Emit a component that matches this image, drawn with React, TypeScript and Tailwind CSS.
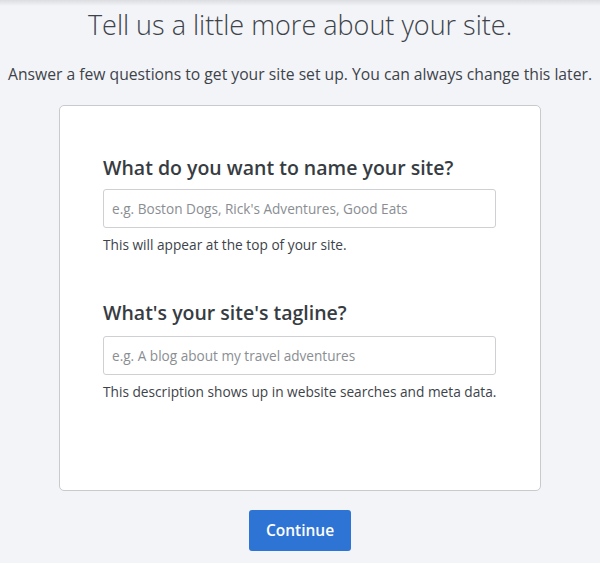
export default function App() {
  return (
    <div className="min-h-[563px] bg-[#f3f4f8] font-['Open_Sans',sans-serif] text-[#3b4147] flex flex-col items-center">
      <div className="w-full h-[6px] bg-gradient-to-b from-[#dcdde1] to-[#f3f4f8]" />
      <h1 className="mt-[0px] text-[27px] leading-[38px] font-light text-[#3d4349]">
        Tell us a little more about your site.
      </h1>
      <p className="mt-[19px] text-[15.7px] leading-[22px] text-[#3d4349]">
        Answer a few questions to get your site set up. You can always change this later.
      </p>
      <div className="mt-[20px] w-[482px] h-[386px] bg-white border border-[#c9cacd] rounded-[5px] px-[43px] pt-[48px]">
        <h2 className="text-[19.5px] leading-[28px] font-semibold text-[#373c42]">
          What do you want to name your site?
        </h2>
        <input
          type="text"
          placeholder="e.g. Boston Dogs, Rick's Adventures, Good Eats"
          className="mt-[7px] w-[393px] h-[39px] border border-[#cfd0d3] rounded-[3px] px-[8px] text-[13.6px] text-[#3d4349] placeholder:text-[#8a8e93] outline-none"
        />
        <p className="mt-[7px] text-[13.7px] leading-[20px] text-[#3d4349]">
          This will appear at the top of your site.
        </p>
        <h2 className="mt-[44px] text-[19.5px] leading-[28px] font-semibold text-[#373c42]">
          What's your site's tagline?
        </h2>
        <input
          type="text"
          placeholder="e.g. A blog about my travel adventures"
          className="mt-[9px] w-[393px] h-[39px] border border-[#cfd0d3] rounded-[3px] px-[8px] text-[13.6px] text-[#3d4349] placeholder:text-[#8a8e93] outline-none"
        />
        <p className="mt-[7px] text-[13.7px] leading-[20px] text-[#3d4349]">
          This description shows up in website searches and meta data.
        </p>
      </div>
      <button className="mt-[19px] w-[102px] h-[41px] bg-[#2e74d4] rounded-[3px] text-white text-[15.5px] font-semibold">
        Continue
      </button>
    </div>
  );
}
